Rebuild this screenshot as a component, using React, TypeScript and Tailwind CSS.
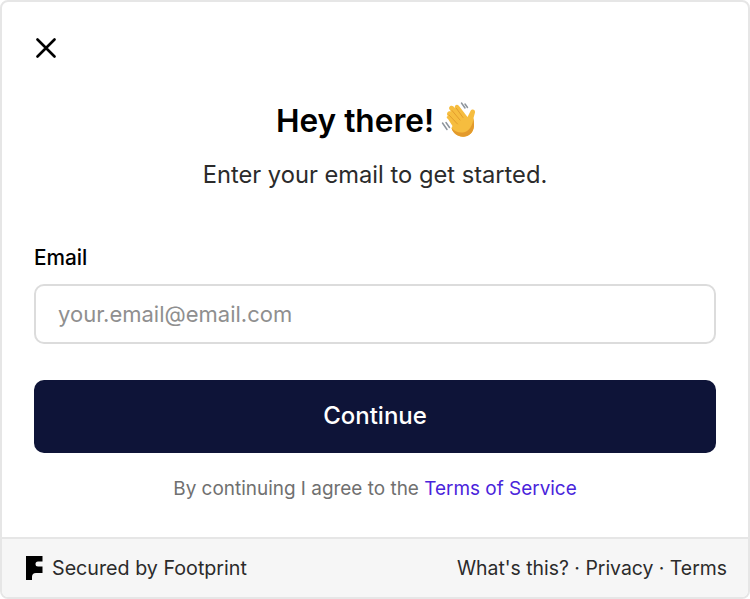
function WaveHand() {
  return (
    <svg viewBox="0 0 42 40" className="-mr-[6px] -mt-[4px] h-[40px] w-[42px]">
      <path d="M4.5 24 L9 30.5 M8 23.5 L11.5 28.5 M23.5 4 L27 9 M27 5 L29.5 8.5" stroke="#8e959c" strokeWidth="1.5" fill="none" strokeLinecap="round" />
      <path
        d="M10 20 L14.5 27 L13.5 29 C15 35 21 38.5 27 37.5 C33 36.5 36.5 31 36 25 L35.5 19 L37 13.5 C37.5 10.5 34 9.5 32.5 12 L29.5 18 L21 7 C19 4.5 16 6.5 17 9 L15.5 7.5 C13 5.5 10 8 11.5 10.5 L13 12.5 C10.5 11.5 8 14 9.5 16.5 L10 17 C8 17.5 8.5 19 10 20 Z"
        fill="#f6bd3f"
      />
      <path d="M14 11.5 L22 21 M11 16 L19.5 25 M18.5 9.5 L25 18.5" stroke="#e0992b" strokeWidth="0.9" strokeLinecap="round" fill="none" />
      <path d="M13.5 29 C15 35 21 38.5 27 37.5 C33 36.5 36.5 31 36 25 L35.5 19 C35 26 31 33 25 33.5 C20 34 16 32 13.5 29 Z" fill="#e39a2c" />
    </svg>
  );
}

function FootprintLogo() {
  return (
    <svg viewBox="0 0 17 24" className="h-[24px] w-[17px]">
      <path
        d="M0 0 H16.5 V5.5 H12 A2.5 2.5 0 0 0 9.5 8 A2.5 2.5 0 0 0 12 10.5 H16.5 V17 H10 A4 4 0 0 0 6 21 V24 H0 Z"
        fill="#000"
      />
    </svg>
  );
}

export default function App() {
  return (
    <div className="h-[599px] w-[750px] bg-white font-['Inter','Liberation_Sans',sans-serif]">
      <div className="flex h-full flex-col overflow-hidden rounded-[8px] border-2 border-[#e6e6e6]">
        <div className="flex flex-1 flex-col px-[32px]">
          <div className="pl-[2px] pt-[36px]">
            <svg viewBox="0 0 20 20" className="h-[20px] w-[20px]">
              <path d="M1.5 1.5 L18.5 18.5 M18.5 1.5 L1.5 18.5" stroke="#000" strokeWidth="2.6" strokeLinecap="round" />
            </svg>
          </div>
          <div className="mt-[39px] flex h-[48px] items-center justify-center gap-[4px]">
            <h1 className="text-[31.6px] font-semibold leading-[48px] text-black">Hey there!</h1>
            <WaveHand />
          </div>
          <p className="mt-[12px] text-center text-[23.7px] leading-[36px] text-[#2b2b2b]">
            Enter your email to get started.
          </p>
          <label className="mt-[50px] block text-[20.8px] font-medium leading-[30px] text-black">Email</label>
          <input
            placeholder="your.email@email.com"
            className="mt-[11px] h-[60px] w-full rounded-[10px] border-2 border-[#dcdcdc] bg-white px-[22px] text-[22px] placeholder:text-[#8f8f8f]"
          />
          <button className="mt-[36px] h-[73px] w-full rounded-[10px] bg-[#0e1438] pb-[2px] text-[24px] font-medium text-white">
            Continue
          </button>
          <p className="mt-[21px] text-center text-[18.95px] leading-[30px] text-[#707070]">
            By continuing I agree to the <span className="text-[#4a24db]">Terms of Service</span>
          </p>
        </div>
        <div className="flex h-[60px] items-center justify-between border-t-2 border-[#e6e6e6] bg-[#f6f6f6] pl-[24px] pr-[21px]">
          <div className="flex items-center gap-[9px]">
            <FootprintLogo />
            <span className="text-[19.7px] leading-[30px] text-[#2b2b2b]">Secured by Footprint</span>
          </div>
          <span className="text-[19.4px] leading-[30px] text-[#2b2b2b]">What's this? · Privacy · Terms</span>
        </div>
      </div>
    </div>
  );
}
